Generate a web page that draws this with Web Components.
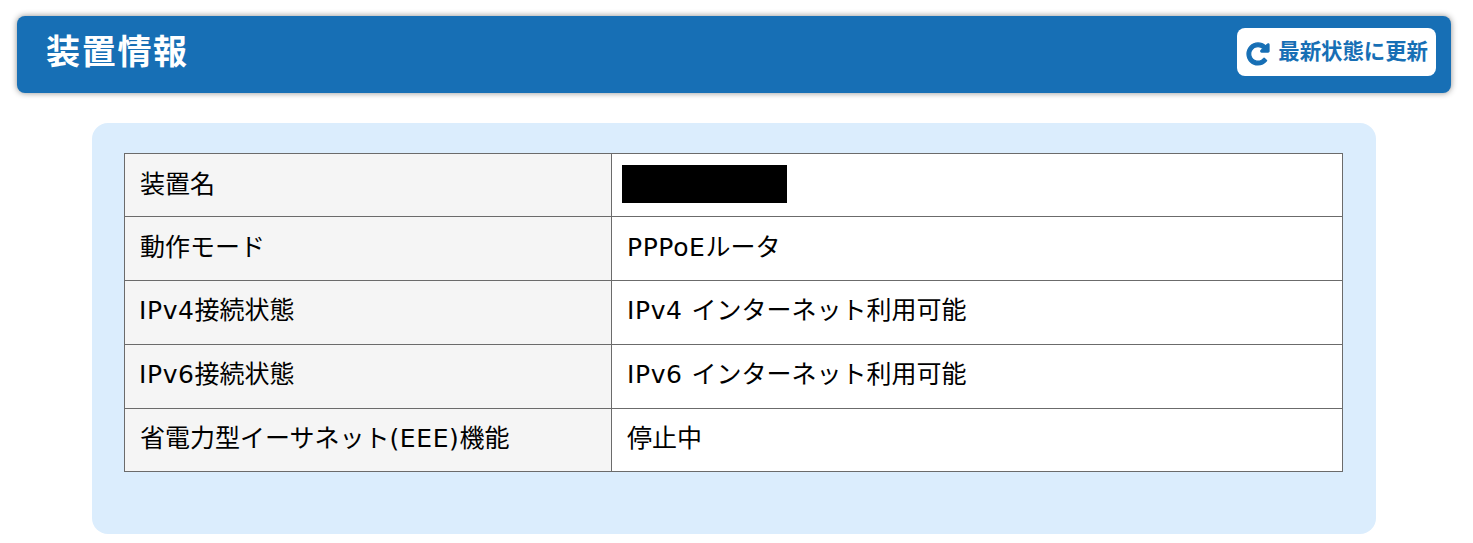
<!DOCTYPE html>
<html lang="ja"><head><meta charset="utf-8"><title>装置情報</title>
<style>
html,body{margin:0;padding:0;background:#fff}
body{font-family:"DejaVu Sans","Noto Sans CJK JP",sans-serif;color:#000}
</style></head><body>
<device-page>
<page-header title-text="装置情報"><refresh-button>最新状態に更新</refresh-button></page-header>
<info-panel>
<info-row first><span slot="label">装置名</span><masked-value></masked-value></info-row>
<info-row><span slot="label">動作モード</span><lat-in>PPPoE</lat-in>ルータ</info-row>
<info-row raised><span slot="label"><lat-in start>IPv4</lat-in>接続状態</span><lat-in>IPv4</lat-in> インターネット利用可能</info-row>
<info-row raised><span slot="label"><lat-in start>IPv6</lat-in>接続状態</span><lat-in>IPv6</lat-in> インターネット利用可能</info-row>
<info-row raised last><span slot="label">省電力型イーサネット<lat-in>(EEE)</lat-in>機能</span>停止中</info-row>
</info-panel>
</device-page>
<script>
function def(name,html,init){customElements.define(name,class extends HTMLElement{
 constructor(){super();this.attachShadow({mode:'open'}).innerHTML=html;}
 connectedCallback(){if(init)init(this);}
});}
def('device-page',`<style>:host{display:block;padding:16px 22px 10px 17px}</style><slot></slot>`);
def('page-header',`<style>
:host{display:block;background:#176fb5;border-radius:8px;box-shadow:0 0 6px rgba(0,0,0,.45)}
.bar{height:77px;box-sizing:border-box;display:flex;align-items:center;justify-content:space-between;padding:0 15px 6px 29px}
h1{margin:0;color:#fff;font-size:34px;font-weight:700;letter-spacing:1.7px;line-height:1}
</style><div class="bar"><h1></h1><slot></slot></div>`,el=>{el.shadowRoot.querySelector('h1').textContent=el.getAttribute('title-text');});
def('refresh-button',`<style>
:host{display:block;background:#fff;border-radius:8px;height:48px;box-sizing:border-box;padding:0 8px 0 10px;color:#176fb5;font-size:21.4px;font-weight:700;line-height:48px;white-space:nowrap}
.w{display:flex;align-items:center;gap:9px;height:48px}
svg{width:22px;height:22px;fill:#176fb5;stroke:#176fb5;stroke-width:90;flex:none;margin-top:3px;overflow:visible}
span{margin-top:1px}
</style><div class="w"><svg viewBox="0 0 1536 1536"><path d="M1536 192v448q0 26-19 45t-45 19h-448q-42 0-59-40-17-39 14-69l138-138q-148-137-349-137-104 0-198.500 40.500t-163.500 109.500-109.500 163.500-40.500 198.500 40.500 198.500 109.500 163.500 163.500 109.500 198.500 40.500q119 0 225-52t179-147q7-10 23-12 15 0 25 9l137 138q9 8 9.500 20.500t-7.500 22.500q-109 132-264 204.500t-327 72.500q-156 0-298-61t-245-164-164-245-61-298 61-298 164-245 245-164 298-61q147 0 284.500 55.500t244.500 156.500l130-129q29-31 70-14 39 17 39 59z"/></svg><span><slot></slot></span></div>`);
def('info-panel',`<style>
:host{display:block;background:#dbedfd;border-radius:16px;margin:30px 75px 0 75px;padding:30px 33px 62px 32px}
.t{border:1px solid #6b6b6b;display:block}
</style><div class="t"><slot></slot></div>`);
def('lat-in',`<style>:host{display:inline;letter-spacing:.6px;word-spacing:0}:host([start]){margin-left:-1px}</style><slot></slot>`);
def('info-row',`<style>
:host{display:grid;grid-template-columns:487px 1fr;border-top:1px solid #6b6b6b;height:63px;font-size:25px;line-height:30px}
:host([first]),:host([last]){height:62px}
:host([first]){border-top:0}
.l,.v{display:flex;align-items:center;padding:0 15px}
.l{background:#f5f5f5;border-right:1px solid #6b6b6b;white-space:nowrap}
.v{background:#fff;white-space:nowrap}
.s{margin-top:-1px;word-spacing:1px}
:host([raised]) .s{margin-top:-3px}
</style><div class="l"><div class="s"><slot name="label"></slot></div></div><div class="v"><div class="s"><slot></slot></div></div>`);
def('masked-value',`<style>:host{display:block;width:165px;height:38px;background:#000;margin:-1px 0 0 -5px}</style>`);
</script></body></html>
